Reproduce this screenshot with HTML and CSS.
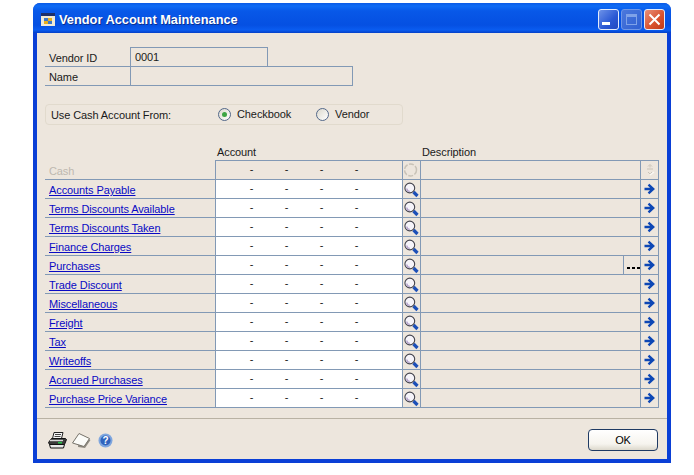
FILE: index.html
```html
<!DOCTYPE html>
<html lang="en">
<head>
<meta charset="UTF-8">
<title>Vendor Account Maintenance</title>
<link rel="stylesheet" href="styles.css">
</head>
<body>

<svg class="defs" width="0" height="0">
    <symbol id="lens" viewBox="0 0 17 18">
        <path d="M10.500 12l4 4" stroke="#1c4fb8" stroke-width="3.200"/>
        <circle cx="6.800" cy="8" r="4.900" fill="#f6f4fa" stroke="#44444e" stroke-width="1.100"/>
        <path d="M3.800 8.500a3 3 0 0 0 3 2.800" fill="none" stroke="#b3a0cc" stroke-width="1.300"/>
    </symbol>
    <symbol id="arrow" viewBox="0 0 18 18">
        <path d="M3.500 9h8M7.500 4.600L12.200 9 7.500 13.400" fill="none" stroke="#0d47b5" stroke-width="2.400"/>
    </symbol>
</svg>

<div class="window">
    <div class="titlebar">
        <svg class="app-icon" width="14" height="13" viewBox="0 0 14 13">
            <rect x="0" y="0" width="14" height="13" fill="#f0ead6"/>
            <rect x="0" y="0" width="14" height="3" fill="#1d2f6a"/>
            <rect x="3" y="5" width="4" height="3" fill="#3f78c8"/>
            <rect x="7" y="5" width="4" height="3" fill="#e8b020"/>
            <rect x="3" y="8" width="4" height="3" fill="#e8b020"/>
            <rect x="7" y="8" width="4" height="3" fill="#3f78c8"/>
        </svg>
        <span class="title">Vendor Account Maintenance</span>
        <div class="caption-btns">
            <div class="caption-btn"><span class="min-mark"></span></div>
            <div class="caption-btn off"><span class="max-mark"></span></div>
            <div class="caption-btn close">
                <svg width="13" height="13" viewBox="0 0 13 13"><path d="M1.500 1.500l10 10M11.500 1.500l-10 10" stroke="#fff" stroke-width="2"/></svg>
            </div>
        </div>
    </div>

    <div class="content">
        <div class="form">
            <div class="field-row">
                <div class="field-label">Vendor ID</div>
                <div class="field-box id-box">0001</div>
            </div>
            <div class="field-row">
                <div class="field-label">Name</div>
                <div class="field-box name-box"></div>
            </div>

            <div class="cash-from">
                <span class="cash-label">Use Cash Account From:</span>
                <span class="radio checked"></span><span class="radio-text checkbook">Checkbook</span>
                <span class="radio"></span><span class="radio-text">Vendor</span>
            </div>

            <div class="table-head">
                <span class="head-account">Account</span>
                <span>Description</span>
            </div>

            <div class="table">
                <div class="row first">
                    <div class="name disabled">Cash</div>
                    <div class="acct grey"><span>-</span><span>-</span><span>-</span><span>-</span></div>
                    <div class="btn"><svg width="17" height="18" viewBox="0 0 17 18"><circle cx="7.500" cy="9" r="6" fill="none" stroke="#c9c3b8" stroke-width="1.500" stroke-dasharray="5 1.500"/></svg></div>
                    <div class="desc"></div>
                    <div class="btn end">
                        <svg width="18" height="18" viewBox="0 0 18 18"><path d="M6 8h6M9 4.500v2M7 5.500l2-2 2 2M7 11l2 2 2-2" fill="none" stroke="#c9c3b8"/><path d="M9 14l4-3" stroke="#fbf9f4" stroke-width="1.500"/></svg>
                    </div>
                </div>
                <div class="row">
                    <div class="name"><a href="#">Accounts Payable</a></div>
                    <div class="acct"><span>-</span><span>-</span><span>-</span><span>-</span></div>
                    <div class="btn"><svg width="17" height="18"><use href="#lens"/></svg></div>
                    <div class="desc"></div>
                    <div class="btn end"><svg width="18" height="18"><use href="#arrow"/></svg></div>
                </div>
                <div class="row">
                    <div class="name"><a href="#">Terms Discounts Available</a></div>
                    <div class="acct"><span>-</span><span>-</span><span>-</span><span>-</span></div>
                    <div class="btn"><svg width="17" height="18"><use href="#lens"/></svg></div>
                    <div class="desc"></div>
                    <div class="btn end"><svg width="18" height="18"><use href="#arrow"/></svg></div>
                </div>
                <div class="row">
                    <div class="name"><a href="#">Terms Discounts Taken</a></div>
                    <div class="acct"><span>-</span><span>-</span><span>-</span><span>-</span></div>
                    <div class="btn"><svg width="17" height="18"><use href="#lens"/></svg></div>
                    <div class="desc"></div>
                    <div class="btn end"><svg width="18" height="18"><use href="#arrow"/></svg></div>
                </div>
                <div class="row">
                    <div class="name"><a href="#">Finance Charges</a></div>
                    <div class="acct"><span>-</span><span>-</span><span>-</span><span>-</span></div>
                    <div class="btn"><svg width="17" height="18"><use href="#lens"/></svg></div>
                    <div class="desc"></div>
                    <div class="btn end"><svg width="18" height="18"><use href="#arrow"/></svg></div>
                </div>
                <div class="row">
                    <div class="name"><a href="#">Purchases</a></div>
                    <div class="acct"><span>-</span><span>-</span><span>-</span><span>-</span></div>
                    <div class="btn"><svg width="17" height="18"><use href="#lens"/></svg></div>
                    <div class="desc"><div class="more"><i></i><i></i><i></i></div></div>
                    <div class="btn end"><svg width="18" height="18"><use href="#arrow"/></svg></div>
                </div>
                <div class="row">
                    <div class="name"><a href="#">Trade Discount</a></div>
                    <div class="acct"><span>-</span><span>-</span><span>-</span><span>-</span></div>
                    <div class="btn"><svg width="17" height="18"><use href="#lens"/></svg></div>
                    <div class="desc"></div>
                    <div class="btn end"><svg width="18" height="18"><use href="#arrow"/></svg></div>
                </div>
                <div class="row">
                    <div class="name"><a href="#">Miscellaneous</a></div>
                    <div class="acct"><span>-</span><span>-</span><span>-</span><span>-</span></div>
                    <div class="btn"><svg width="17" height="18"><use href="#lens"/></svg></div>
                    <div class="desc"></div>
                    <div class="btn end"><svg width="18" height="18"><use href="#arrow"/></svg></div>
                </div>
                <div class="row">
                    <div class="name"><a href="#">Freight</a></div>
                    <div class="acct"><span>-</span><span>-</span><span>-</span><span>-</span></div>
                    <div class="btn"><svg width="17" height="18"><use href="#lens"/></svg></div>
                    <div class="desc"></div>
                    <div class="btn end"><svg width="18" height="18"><use href="#arrow"/></svg></div>
                </div>
                <div class="row">
                    <div class="name"><a href="#">Tax</a></div>
                    <div class="acct"><span>-</span><span>-</span><span>-</span><span>-</span></div>
                    <div class="btn"><svg width="17" height="18"><use href="#lens"/></svg></div>
                    <div class="desc"></div>
                    <div class="btn end"><svg width="18" height="18"><use href="#arrow"/></svg></div>
                </div>
                <div class="row">
                    <div class="name"><a href="#">Writeoffs</a></div>
                    <div class="acct"><span>-</span><span>-</span><span>-</span><span>-</span></div>
                    <div class="btn"><svg width="17" height="18"><use href="#lens"/></svg></div>
                    <div class="desc"></div>
                    <div class="btn end"><svg width="18" height="18"><use href="#arrow"/></svg></div>
                </div>
                <div class="row">
                    <div class="name"><a href="#">Accrued Purchases</a></div>
                    <div class="acct"><span>-</span><span>-</span><span>-</span><span>-</span></div>
                    <div class="btn"><svg width="17" height="18"><use href="#lens"/></svg></div>
                    <div class="desc"></div>
                    <div class="btn end"><svg width="18" height="18"><use href="#arrow"/></svg></div>
                </div>
                <div class="row">
                    <div class="name"><a href="#">Purchase Price Variance</a></div>
                    <div class="acct"><span>-</span><span>-</span><span>-</span><span>-</span></div>
                    <div class="btn"><svg width="17" height="18"><use href="#lens"/></svg></div>
                    <div class="desc"></div>
                    <div class="btn end"><svg width="18" height="18"><use href="#arrow"/></svg></div>
                </div>
            </div>
        </div>

        <div class="footer">
            <div class="tools">
                <svg width="19" height="17" viewBox="0 0 19 17">
                    <path d="M6 0.500h9l-1.500 6h-9z" fill="#f6f6f6" stroke="#222"/>
                    <path d="M7 2.500h6M6.500 4.500h6" stroke="#444"/>
                    <path d="M3.500 6.500h14l1 1-2 5h-15l-1-2z" fill="#3b3b3b" stroke="#111"/>
                    <path d="M2 8.500h13" stroke="#d8d8d8" stroke-width="1.400"/>
                    <path d="M10 10.700h4" stroke="#27c24a" stroke-width="1.600"/>
                    <path d="M1.500 12.500h15l-1 3.500h-13z" fill="#e9e9e9" stroke="#111"/>
                </svg>
                <svg width="19" height="16" viewBox="0 0 19 16">
                    <path d="M7.500 1l11 6-5.500 8-7-1z" fill="#8f8a80"/>
                    <path d="M7 0.500l10.500 5-5.500 8-11.500-3.500z" fill="#fbfbf8" stroke="#77736a"/>
                </svg>
                <svg class="help" width="15" height="15" viewBox="0 0 15 15">
                    <circle cx="7.500" cy="7.500" r="7" fill="#7fa6de"/>
                    <circle cx="7.500" cy="7.500" r="5" fill="#2f63bd"/>
                    <text x="7.500" y="11" text-anchor="middle" class="help-mark">?</text>
                </svg>
            </div>
            <div class="ok">OK</div>
        </div>
    </div>
</div>

</body>
</html>
```

FILE: styles.css
```css
html, body {
    margin: 0;
    height: 100%;
    background-color: #fff;
}
body {
    font-family: "Liberation Sans", Arial, sans-serif;
    font-size: 11px;
    letter-spacing: -0.1px;
    color: #1a1a1a;
    overflow: hidden;
}
.defs {
    display: block;
}
.window {
    width: 638px;
    height: 460px;
    margin: 3px 0 0 33px;
    box-sizing: border-box;
    display: flex;
    flex-direction: column;
    background-color: #0a3fd6;
    border-radius: 7px 7px 0 0;
    padding: 0 4px 4px 4px;
}
.titlebar {
    height: 30px;
    margin: 0 -4px;
    padding: 3px 6px 0 8px;
    box-sizing: border-box;
    display: flex;
    align-items: center;
    border-radius: 7px 7px 0 0;
    background: linear-gradient(#0a5ae6 0, #0f6cf5 3px, #0858e8 8px, #0550e2 22px, #0a5cf0 27px, #0440c8 30px);
}
.app-icon {
    margin-right: 4px;
}
.title {
    flex: 1;
    color: #fff;
    font-weight: bold;
    font-size: 12.8px;
    letter-spacing: 0;
    text-shadow: 1px 1px 0 #0a2f90;
}
.caption-btns {
    display: flex;
    gap: 2px;
}
.caption-btn {
    width: 21px;
    height: 21px;
    box-sizing: border-box;
    border: 1px solid #e4ecfb;
    border-radius: 3px;
    background: linear-gradient(135deg, #6d92e8, #2a58d4 60%, #2148c0);
    display: flex;
    align-items: center;
    justify-content: center;
}
.caption-btn.off {
    border-color: #6f96e6;
    background: linear-gradient(135deg, #4b78dc, #2f60d2);
}
.caption-btn.close {
    background: linear-gradient(135deg, #e8907a, #d8502c 60%, #bf3a18);
}
.min-mark {
    width: 8px;
    height: 3px;
    background-color: #fff;
    margin: 8px 5px 0 0;
}
.max-mark {
    width: 11px;
    height: 11px;
    box-sizing: border-box;
    border: 1px solid #7fa2e8;
    border-top-width: 3px;
}
.content {
    flex: 1;
    background-color: #ede6dd;
    display: flex;
    flex-direction: column;
}
.form {
    padding: 14px 8px 10px 8px;
}
.field-row {
    display: flex;
    height: 19px;
}
.field-label {
    width: 85px;
    box-sizing: border-box;
    padding: 3px 0 0 4px;
    height: 20px;
    line-height: 16px;
    border-bottom: 1px solid #8299b5;
}
.field-box {
    box-sizing: border-box;
    border: 1px solid #8299b5;
    line-height: 18px;
    padding-left: 4px;
}
.id-box {
    width: 138px;
    height: 20px;
}
.name-box {
    width: 223px;
    height: 20px;
}
.cash-from {
    width: 358px;
    height: 21px;
    box-sizing: border-box;
    margin-top: 19px;
    padding-left: 5px;
    border: 1px solid #e1dacd;
    border-radius: 4px;
    display: flex;
    align-items: center;
}
.cash-label {
    width: 167px;
    padding-top: 1px;
}
.radio {
    width: 13px;
    height: 13px;
    box-sizing: border-box;
    border: 1px solid #53688a;
    border-radius: 50%;
    background: linear-gradient(135deg, #dcd9ce, #fff);
    display: flex;
    align-items: center;
    justify-content: center;
}
.radio.checked::before {
    content: "";
    width: 5px;
    height: 5px;
    border-radius: 50%;
    background-color: #3da544;
}
.radio-text {
    margin: -2px 0 0 6px;
}
.checkbook {
    width: 79px;
}
.table-head {
    display: flex;
    height: 15px;
    margin-top: 20px;
    padding-left: 172px;
    line-height: 15px;
}
.head-account {
    width: 205px;
}
.row {
    display: flex;
    height: 19px;
}
.row.first {
    height: 20px;
}
.row > div {
    box-sizing: border-box;
    border-bottom: 1px solid #8299b5;
}
.row.first > div:not(.name) {
    border-top: 1px solid #8299b5;
}
.name {
    width: 170px;
    padding-left: 4px;
    line-height: 20px;
    white-space: nowrap;
}
.row.first .name {
    padding-top: 1px;
}
.name a {
    color: #0a0ac4;
}
.name.disabled {
    color: #bdb8b0;
}
.acct {
    width: 187px;
    padding-left: 18px;
    border-left: 1px solid #8299b5;
    background-color: #fff;
    display: flex;
    line-height: 17px;
}
.acct.grey {
    background-color: transparent;
}
.acct span {
    width: 35px;
    text-align: center;
}
.btn {
    width: 18px;
    border-left: 1px solid #8299b5;
    display: flex;
    align-items: center;
    justify-content: center;
}
.btn svg {
    display: block;
    flex: none;
}
.desc {
    width: 220px;
    border-left: 1px solid #8299b5;
    display: flex;
    justify-content: flex-end;
}
.more {
    width: 17px;
    box-sizing: border-box;
    border-left: 1px solid #8299b5;
    padding: 11px 0 0 3px;
    display: flex;
    gap: 2px;
}
.more i {
    width: 3px;
    height: 2px;
    background-color: #000;
}
.end {
    width: 19px;
    border-right: 1px solid #8299b5;
}
.footer {
    flex: 1;
    border-top: 1px solid #b9b2a4;
    padding: 10px 9px 0 11px;
    display: flex;
    justify-content: space-between;
    align-items: flex-start;
}
.tools {
    display: flex;
    align-items: center;
    gap: 5px;
    margin-top: 3px;
}
.help {
    margin-left: 2px;
}
.help-mark {
    fill: #fff;
    font-size: 10px;
    font-weight: bold;
}
.ok {
    width: 70px;
    height: 22px;
    box-sizing: border-box;
    border: 1px solid #1f3a63;
    border-radius: 4px;
    background: linear-gradient(#fff, #f6f4ee 70%, #dcd8cc);
    text-align: center;
    line-height: 20px;
    color: #000;
}
```
